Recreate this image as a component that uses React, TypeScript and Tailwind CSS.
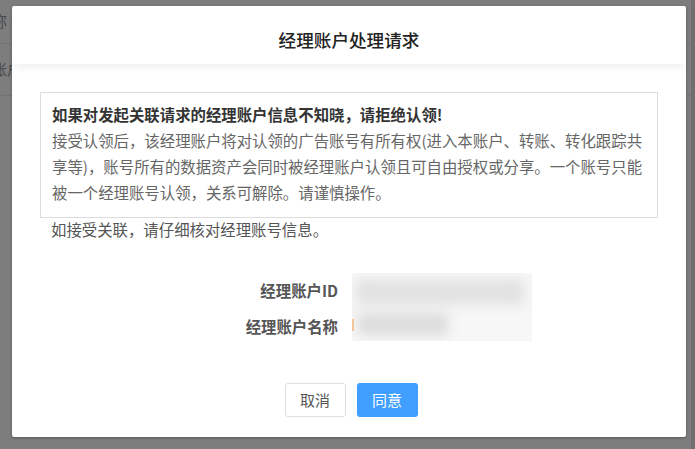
import React from 'react';

const font = { fontFamily: '"Microsoft YaHei", "Noto Sans CJK SC", "Noto Sans", sans-serif' };

const App: React.FC = () => {
  return (
    <div className="relative w-[695px] h-[449px] bg-[#7d7d7d] overflow-hidden" style={font}>
      {/* page underneath the overlay */}
      <div className="absolute inset-0 text-[15px] text-[#4a4a4a]">
        <div className="h-[44px] border-b border-[#737373] flex items-center -ml-[8px]">称</div>
        <div className="h-[52px] border-b border-[#737373] flex items-center -ml-[8px]">账户</div>
        <div className="absolute right-0 top-0 bottom-0 w-[4px] bg-[#6f6f6f]" />
      </div>

      <div className="absolute left-[12px] top-[6px] w-[674px] h-[431px] bg-white rounded-[2px] shadow-[0_1px_3px_rgba(0,0,0,0.3)] flex flex-col">
        <div className="h-[58px] flex items-center justify-center shadow-[0_6px_8px_-2px_rgba(0,0,0,0.06)] relative z-10">
          <h2 className="text-[17.6px] text-[#222] font-medium pt-[10px]">经理账户处理请求</h2>
        </div>

        <div className="px-[28px] pt-[28px]">
          <div className="border border-[#dcdcdc] px-[11px] pt-[8px] pb-[12px] text-[15.4px] leading-[26px] text-[#666]">
            <p className="font-bold text-[#333]">如果对发起关联请求的经理账户信息不知晓，请拒绝认领!</p>
            <p>
              接受认领后，该经理账户将对认领的广告账号有所有权(进入本账户、转账、转化跟踪共享等)，账号所有的数据资产会同时被经理账户认领且可自由授权或分享。一个账号只能被一个经理账号认领，关系可解除。请谨慎操作。
            </p>
          </div>
          <p className="text-[15.4px] text-[#555] leading-[22px] pl-[11px]">如接受关联，请仔细核对经理账号信息。</p>
        </div>

        <div className="flex mt-[33px] gap-[14px]">
          <div className="w-[326px] flex flex-col items-end gap-[10px] pt-[4px] text-[15.4px] font-bold text-[#555]">
            <span className="leading-[26px]">经理账户ID</span>
            <span className="leading-[26px]">经理账户名称</span>
          </div>
          <div className="relative w-[180px] h-[68px] overflow-hidden bg-[#f7f7f7]">
            <div className="absolute left-[4px] top-[6px] w-[168px] h-[26px] bg-[#e2e2e2] blur-[6px]" />
            <div className="absolute left-[6px] top-[40px] w-[90px] h-[22px] bg-[#dcdcdc] blur-[6px]" />
            <div className="absolute left-[0px] top-[46px] w-[2px] h-[12px] bg-[#f3c79a]" />
          </div>
        </div>

        <div className="flex justify-center gap-[11px] mt-[42px] pl-[4px]">
          <button className="w-[61px] h-[34px] border border-[#dcdfe6] rounded-[3px] text-[15px] text-[#555] bg-white">取消</button>
          <button className="w-[61px] h-[34px] rounded-[3px] text-[15px] text-white bg-[#409eff]">同意</button>
        </div>
      </div>
    </div>
  );
};

export default App;
